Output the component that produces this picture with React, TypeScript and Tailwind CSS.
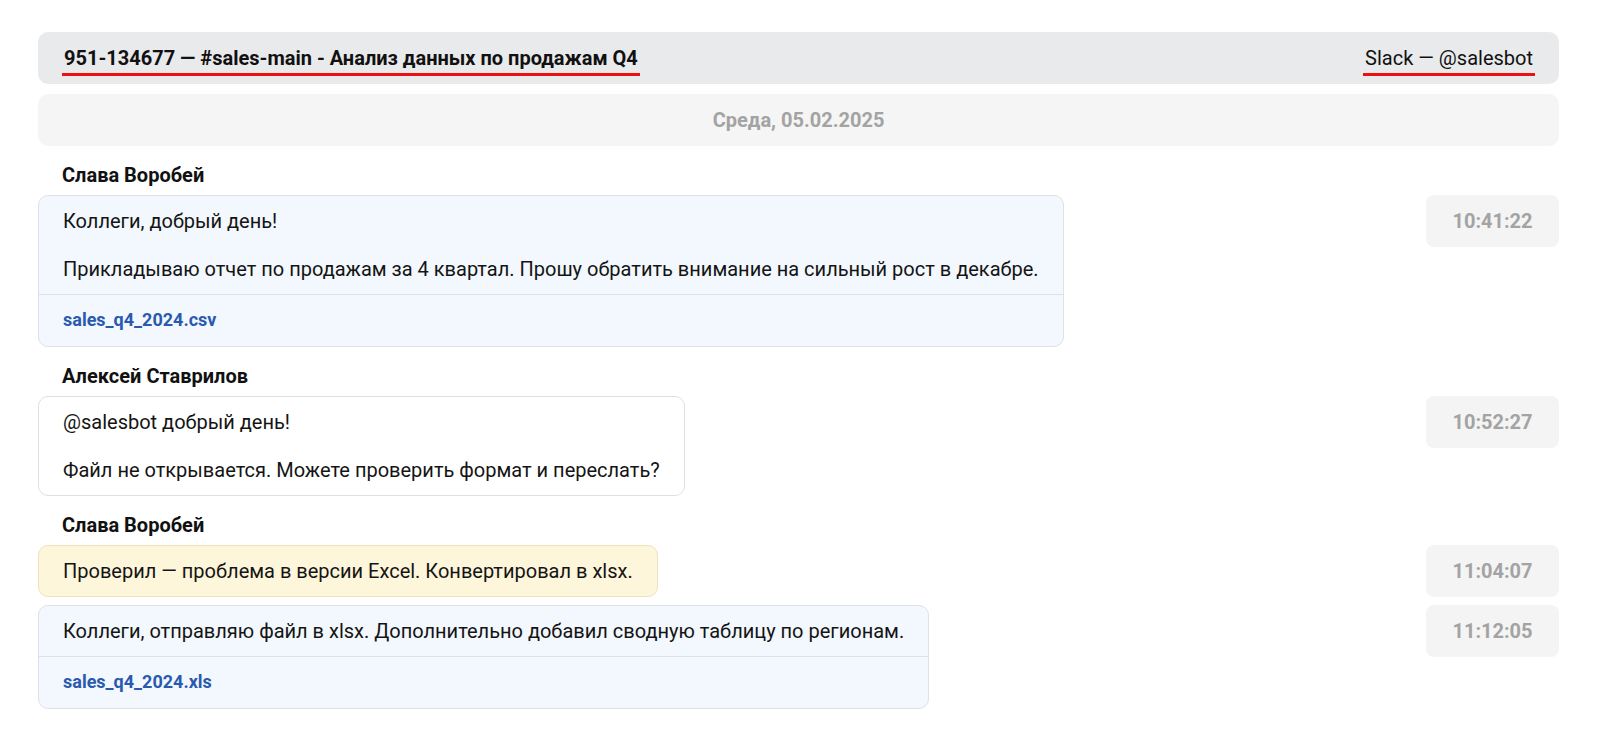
import React from 'react';

type Msg = {
  author?: string;
  text: string;
  file?: string;
  time: string;
  tone: 'blue' | 'white' | 'yellow';
};

const messages: Msg[] = [
  {
    author: 'Слава Воробей',
    text: 'Коллеги, добрый день!\n\nПрикладываю отчет по продажам за 4 квартал. Прошу обратить внимание на сильный рост в декабре.',
    file: 'sales_q4_2024.csv',
    time: '10:41:22',
    tone: 'blue',
  },
  {
    author: 'Алексей Ставрилов',
    text: '@salesbot добрый день!\n\nФайл не открывается. Можете проверить формат и переслать?',
    time: '10:52:27',
    tone: 'white',
  },
  {
    author: 'Слава Воробей',
    text: 'Проверил — проблема в версии Excel. Конвертировал в xlsx.',
    time: '11:04:07',
    tone: 'yellow',
  },
  {
    text: 'Коллеги, отправляю файл в xlsx. Дополнительно добавил сводную таблицу по регионам.',
    file: 'sales_q4_2024.xls',
    time: '11:12:05',
    tone: 'blue',
  },
];

const toneClass = {
  blue: 'bg-[#f2f8fd] border-[#dde2e7]',
  white: 'bg-white border-[#dde0e4]',
  yellow: 'bg-[#fef6da] border-[#eee3bd]',
};

const MessageRow = ({ msg }: { msg: Msg }) => (
  <div className="flex items-start justify-between gap-6">
    <div className={`w-fit rounded-[10px] border ${toneClass[msg.tone]}`}>
      <div className="px-6 py-[13px] text-[20px] leading-6 text-[#141414] whitespace-pre-line">
        {msg.text}
      </div>
      {msg.file && (
        <div className="border-t border-[#dde2e7] px-6 py-[13px] leading-6">
          <a className="text-[18px] font-bold text-[#2a5aad]">{msg.file}</a>
        </div>
      )}
    </div>
    <div className="flex h-[52px] w-[133px] shrink-0 items-center justify-center rounded-[8px] bg-[#f4f4f4] text-[20px] font-bold text-[#a3a3a3]">
      {msg.time}
    </div>
  </div>
);

export default function App() {
  return (
    <div
      className="min-h-screen bg-white px-[38px] pt-8 pb-8"
      style={{ fontFamily: 'Roboto, "Noto Sans", sans-serif' }}
    >
      <div className="flex items-start justify-between rounded-[10px] bg-[#e9eaec] px-6 pt-[14px] pb-[8px] text-[20px] leading-6 text-[#111]">
        <span className="border-b-[3px] border-[#ee1111] px-[2px] pb-[3px] font-bold">
          951-134677 — #sales-main - Анализ данных по продажам Q4
        </span>
        <span className="border-b-[3px] border-[#ee1111] px-[2px] pb-[3px]">
          Slack — @salesbot
        </span>
      </div>

      <div className="mt-[10px] flex h-[52px] items-center justify-center rounded-[10px] bg-[#f5f5f5] text-[20px] font-bold text-[#a3a3a3]">
        Среда, 05.02.2025
      </div>

      <div className="mt-2 flex flex-col gap-2">
        {messages.map((msg, i) => (
          <React.Fragment key={i}>
            {msg.author && (
              <div className="mt-[9px] px-6 text-[20px] font-bold leading-6 text-[#111]">
                {msg.author}
              </div>
            )}
            <MessageRow msg={msg} />
          </React.Fragment>
        ))}
      </div>
    </div>
  );
}
